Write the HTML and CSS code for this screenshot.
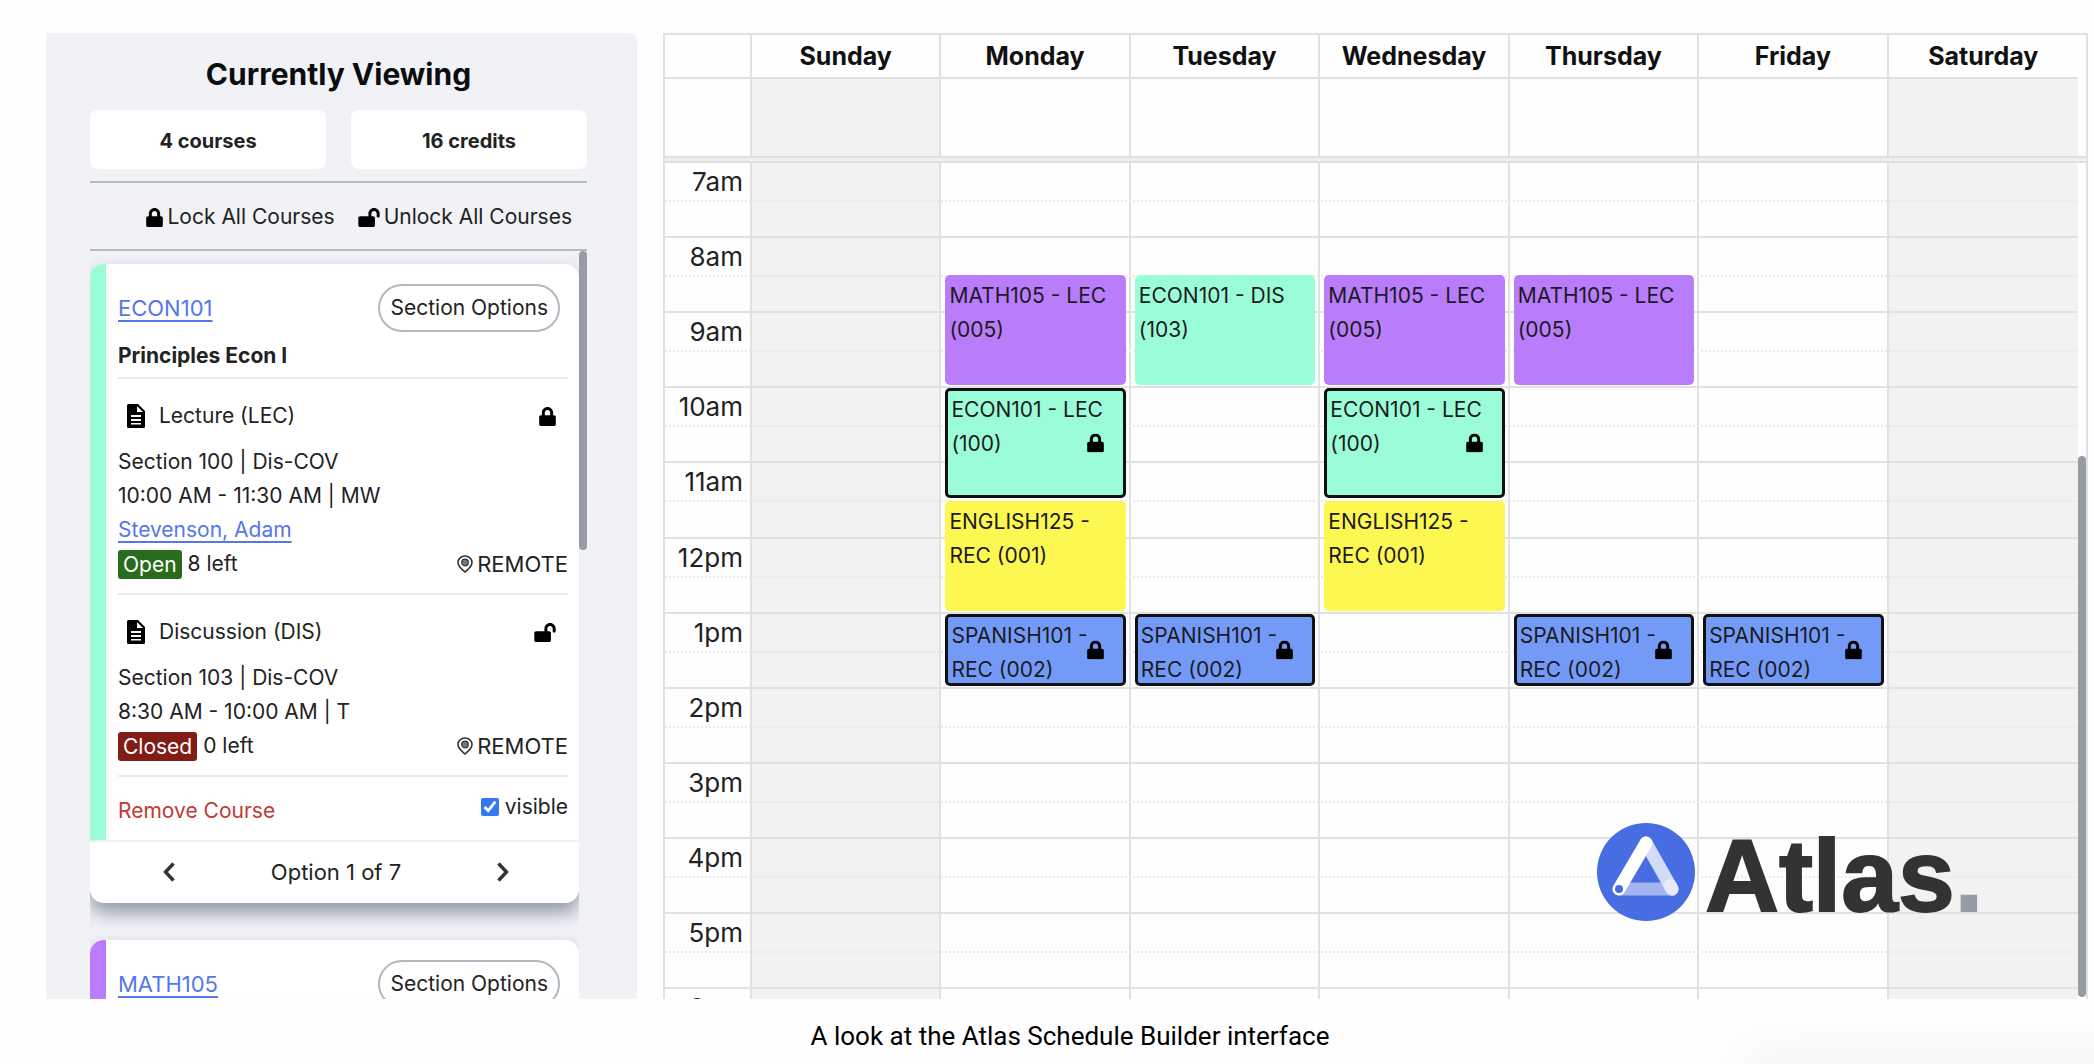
FILE: index.html
```html
<!DOCTYPE html>
<html lang="en">
<head>
<meta charset="utf-8">
<title>Atlas Schedule Builder</title>
<link rel="stylesheet" href="styles.css">
</head>
<body>
<svg class="sprite" aria-hidden="true">
  <symbol id="lock" viewBox="0 0 448 512"><path d="M400 224h-24v-72C376 68.2 307.8 0 224 0S72 68.2 72 152v72H48c-26.5 0-48 21.5-48 48v192c0 26.5 21.5 48 48 48h352c26.5 0 48-21.5 48-48V272c0-26.5-21.5-48-48-48zm-104 0H152v-72c0-39.7 32.3-72 72-72s72 32.3 72 72v72z"/></symbol>
  <symbol id="unlock" viewBox="0 0 576 512"><path d="M423.500 0C339.500.3 272 69.500 272 153.500V224H48c-26.500 0-48 21.500-48 48v192c0 26.500 21.500 48 48 48h352c26.500 0 48-21.500 48-48V272c0-26.500-21.500-48-48-48h-48v-71.100c0-39.600 31.700-72.500 71.300-72.900 40-.4 72.700 32.100 72.700 72v80c0 13.300 10.700 24 24 24h32c13.300 0 24-10.700 24-24v-80C576 68 507.500-.3 423.500 0z"/></symbol>
  <symbol id="file" viewBox="0 0 18 24"><path fill-rule="evenodd" d="M1.500 0H11l7 7v15.500A1.500 1.500 0 0 1 16.500 24h-15A1.500 1.500 0 0 1 0 22.500v-21A1.500 1.500 0 0 1 1.500 0zM10 2v6h6zM4 11v2h10v-2zM4 15v2h10v-2zM4 19v1.500h10V19z"/></symbol>
  <symbol id="pin" viewBox="0 0 16 18"><path fill="none" stroke="#333" stroke-width="1.600" d="M8 17C4.500 14 1 11.500 1 7.500a7 6.500 0 0 1 14 0C15 11.500 11.500 14 8 17z"/><circle cx="8" cy="7.500" r="3.300" fill="#777" stroke="#333" stroke-width="1.200"/></symbol>
  <symbol id="prev" viewBox="0 0 12 20"><path fill="none" stroke="#333" stroke-width="3.400" d="M10.500 1.500L2.500 10l8 8.500"/></symbol>
  <symbol id="next" viewBox="0 0 12 20"><path fill="none" stroke="#333" stroke-width="3.400" d="M1.500 1.500l8 8.500-8 8.500"/></symbol>
</svg>
<figure class="shot">
  <div class="app">
    <aside class="panel">
      <h1 class="panel-title">Currently Viewing</h1>
      <div class="stats">
        <div class="stat">4 courses</div>
        <div class="stat">16 credits</div>
      </div>
      <div class="lock-bar">
        <button class="plain" type="button"><svg class="lock"><use href="#lock"/></svg>Lock All Courses</button>
        <button class="plain" type="button"><svg class="unlock"><use href="#unlock"/></svg>Unlock All Courses</button>
      </div>
      <div class="course-list">
        <div class="cards">
          <article class="card">
            <div class="card-body mint">
              <header class="card-head"><a href="#econ101">ECON101</a><button class="pill" type="button">Section Options</button></header>
              <h2 class="card-name">Principles Econ I</h2>
              <section class="section">
                <div class="section-type"><svg class="file"><use href="#file"/></svg><span>Lecture (LEC)</span><button class="plain lock-toggle" type="button" aria-label="Unlock section"><svg class="lock"><use href="#lock"/></svg></button></div>
                <p>Section 100 | Dis-COV</p>
                <p>10:00 AM - 11:30 AM | MW</p>
                <p><a href="#stevenson">Stevenson, Adam</a></p>
                <p class="seats"><span class="badge open">Open</span>8 left<span class="place"><svg class="pin"><use href="#pin"/></svg>REMOTE</span></p>
              </section>
              <section class="section">
                <div class="section-type"><svg class="file"><use href="#file"/></svg><span>Discussion (DIS)</span><button class="plain lock-toggle" type="button" aria-label="Lock section"><svg class="unlock"><use href="#unlock"/></svg></button></div>
                <p>Section 103 | Dis-COV</p>
                <p>8:30 AM - 10:00 AM | T</p>
                <p class="seats"><span class="badge closed">Closed</span>0 left<span class="place"><svg class="pin"><use href="#pin"/></svg>REMOTE</span></p>
              </section>
              <div class="card-actions">
                <button class="plain remove" type="button">Remove Course</button>
                <label class="visible"><input type="checkbox" checked>visible</label>
              </div>
            </div>
            <footer class="pager">
              <button class="plain" type="button" aria-label="Previous option"><svg class="chevron"><use href="#prev"/></svg></button>
              <span>Option 1 of 7</span>
              <button class="plain" type="button" aria-label="Next option"><svg class="chevron"><use href="#next"/></svg></button>
            </footer>
          </article>
          <article class="card">
            <div class="card-body purple">
              <header class="card-head"><a href="#math105">MATH105</a><button class="pill" type="button">Section Options</button></header>
            </div>
          </article>
        </div>
        <div class="track"><div class="thumb"></div></div>
      </div>
    </aside>

    <main class="calendar">
      <div class="row days">
        <div></div><div>Sunday</div><div>Monday</div><div>Tuesday</div><div>Wednesday</div><div>Thursday</div><div>Friday</div><div>Saturday</div>
      </div>
      <div class="row all-day">
        <div></div><div class="weekend"></div><div></div><div></div><div></div><div></div><div></div><div class="weekend"></div>
      </div>
      <div class="divider"></div>
      <div class="row times">
        <div class="col axis"></div><div class="col sun weekend"></div><div class="col mon"></div><div class="col tue"></div><div class="col wed"></div><div class="col thu"></div><div class="col fri"></div><div class="col sat weekend"></div>
        <div class="hour">7am</div>
        <div class="hour">8am</div>
        <div class="hour">9am</div>
        <div class="hour">10am</div>
        <div class="hour">11am</div>
        <div class="hour">12pm</div>
        <div class="hour">1pm</div>
        <div class="hour">2pm</div>
        <div class="hour">3pm</div>
        <div class="hour">4pm</div>
        <div class="hour">5pm</div>
        <div class="hour">6pm</div>
        <div class="event purple mon at-830">MATH105 - LEC (005)</div>
        <div class="event mint tue at-830">ECON101 - DIS (103)</div>
        <div class="event purple wed at-830">MATH105 - LEC (005)</div>
        <div class="event purple thu at-830">MATH105 - LEC (005)</div>
        <div class="event mint locked mon at-10">ECON101 - LEC (100)<svg class="lock"><use href="#lock"/></svg></div>
        <div class="event mint locked wed at-10">ECON101 - LEC (100)<svg class="lock"><use href="#lock"/></svg></div>
        <div class="event yellow mon at-1130">ENGLISH125 - REC (001)</div>
        <div class="event yellow wed at-1130">ENGLISH125 - REC (001)</div>
        <div class="event blue locked mon at-13">SPANISH101 - REC (002)<svg class="lock"><use href="#lock"/></svg></div>
        <div class="event blue locked tue at-13">SPANISH101 - REC (002)<svg class="lock"><use href="#lock"/></svg></div>
        <div class="event blue locked thu at-13">SPANISH101 - REC (002)<svg class="lock"><use href="#lock"/></svg></div>
        <div class="event blue locked fri at-13">SPANISH101 - REC (002)<svg class="lock"><use href="#lock"/></svg></div>
        <div class="thumb"></div>
      </div>
      <div class="brand">
        <svg class="brand-mark" viewBox="0 0 98 98" aria-hidden="true">
          <circle cx="49" cy="49" r="49" fill="#486de3"/>
          <g fill="none" stroke-linecap="round">
            <path stroke="#a4b5f0" stroke-width="13" d="M22 66h53"/>
            <path stroke="#d2dbf8" stroke-width="13" d="M49 20l26 46"/>
            <path stroke="#e5eafb" stroke-width="13" d="M73 62.500L75 66"/>
            <path stroke="#fff" stroke-width="13" d="M49 20L22 66"/>
          </g>
          <circle cx="22" cy="66" r="4" fill="#486de3"/>
        </svg>
        <span class="brand-name">Atlas<span class="brand-dot">.</span></span>
      </div>
    </main>
  </div>
  <figcaption class="caption">A look at the Atlas Schedule Builder interface</figcaption>
</figure>
<div class="corner-shade"></div>
</body>
</html>
```
FILE: styles.css
```css
:root {
  --line: #e1e1e1;
  --mint: #9afdd8;
  --purple: #b97cfa;
  --yellow: #fdf751;
  --blue: #749af8;
  --thumb: #969ba6;
}

* { box-sizing: border-box; }

body {
  margin: 0;
  background: #fefefe;
  color: #222;
  font: 21px/34px Inter, "Liberation Sans", sans-serif;
  overflow: hidden;
}

h1, h2, p { margin: 0; }
a { color: #5577ea; text-underline-offset: 4px; text-decoration-thickness: 2px; }
button, input { font: inherit; color: inherit; }
.sprite { display: none; }

.shot {
  display: flex;
  flex-direction: column;
  height: 100vh;
  margin: 0;
  padding-top: 33px;
}

.app {
  flex: 1;
  min-height: 0;
  display: grid;
  grid-template-columns: minmax(0, 591fr) minmax(0, 1425fr);
  grid-template-rows: minmax(0, 1fr);
  gap: 26px;
  padding: 0 6px 0 46px;
}

.caption {
  padding: 20px 0 11px 46px;
  color: #000;
  font: 26px/34px Roboto, "Liberation Sans", sans-serif;
  text-align: center;
}

/* Side panel */
.panel {
  display: flex;
  flex-direction: column;
  min-height: 0;
  padding: 21px 50px 0 44px;
  background: #f1f2f6;
  border-top-right-radius: 8px;
}

.panel-title {
  margin-bottom: 16px;
  color: #0c0d10;
  font-size: 30px;
  line-height: 40px;
  text-align: center;
}

.stats {
  display: grid;
  grid-template-columns: 1fr 1fr;
  gap: 25px;
  margin-bottom: 12px;
}

.stat {
  padding: 14px 0 11px;
  background: #fff;
  border-radius: 8px;
  font-size: 20px;
  font-weight: 700;
  text-align: center;
}

.lock-bar {
  display: flex;
  justify-content: flex-end;
  gap: 23px;
  padding: 17px 15px 15px;
  border: solid #b6b9c4;
  border-width: 2px 0;
}

.plain {
  display: flex;
  align-items: center;
  gap: 4px;
  padding: 0;
  border: 0;
  background: none;
  line-height: 34px;
  white-space: nowrap;
}

svg.lock { width: 17px; height: 19px; fill: #000; }
svg.unlock { width: 22px; height: 19px; fill: #000; }
svg.file { width: 18px; height: 24px; fill: #000; }
svg.pin { width: 16px; height: 18px; }
svg.chevron { width: 12px; height: 20px; }

.course-list {
  flex: 1;
  display: flex;
  min-height: 0;
}

.cards {
  flex: 1;
  min-height: 0;
  padding-top: 13px;
  overflow: hidden;
}

.track { width: 8px; }
.thumb { background: var(--thumb); border-radius: 4px; }
.track .thumb { height: 40%; }

.card {
  margin-bottom: 37px;
  background: #fff;
  border-radius: 14px;
  box-shadow: 0 10px 18px #9399a6;
}

.card-body {
  padding: 20px 11px 12px 12px;
  border-left: 16px solid;
  border-top-left-radius: 14px;
}
.card-body.mint { border-left-color: var(--mint); }
.card-body.purple { border-left-color: var(--purple); }

.card-head {
  display: flex;
  align-items: center;
  justify-content: space-between;
  padding-right: 8px;
}
.card-head a, .place, .pager { font-size: 22px; }

.pill {
  height: 48px;
  padding: 0 10px;
  background: #fff;
  border: 2px solid #b4b7c1;
  border-radius: 24px;
}

.card-name {
  padding: 7px 0 4px;
  font-size: 21px;
  line-height: 34px;
}

.section {
  padding: 20px 0 12px;
  border: solid #ececee;
  border-width: 2px 0;
}
.section + .section { border-top: 0; }

.section-type {
  display: flex;
  align-items: center;
  gap: 14px;
  margin-bottom: 12px;
  padding: 0 12px 0 9px;
}
.lock-toggle { margin-left: auto; }

.seats { display: flex; align-items: center; gap: 6px; }
.badge {
  padding: 0 5px;
  border-radius: 3px;
  color: #fff;
  line-height: 29px;
}
.open { background: #2a6b1d; }
.closed { background: #841c16; }
.place { display: flex; align-items: center; gap: 4px; margin-left: auto; }

.card-actions {
  display: flex;
  align-items: flex-start;
  justify-content: space-between;
  padding-top: 13px;
}
.remove { padding-top: 4px; color: #c13a35; }
.visible { display: flex; align-items: center; gap: 6px; }
.visible input { width: 18px; height: 18px; margin: 0; accent-color: #3478f6; }

.pager {
  display: flex;
  align-items: center;
  justify-content: space-between;
  padding: 13px 70px 14px 73px;
  border-top: 2px solid #efeff0;
}

/* Calendar */
.calendar {
  position: relative;
  display: flex;
  flex-direction: column;
  min-height: 0;
  border: 2px solid var(--line);
  border-bottom: 0;
  overflow: hidden;
}

.row {
  display: grid;
  grid-template-columns: 87px repeat(7, minmax(0, 1fr));
  padding-right: 8px;
}

.days > div, .all-day > div, .col { border-right: 2px solid var(--line); }
.days > :last-child, .all-day > :last-child, .sat { border-right: 0; }

.days > div {
  height: 44px;
  border-bottom: 2px solid var(--line);
  color: #111;
  font-size: 25px;
  font-weight: 700;
  line-height: 42px;
  text-align: center;
}

.all-day > div { height: 77px; }
.weekend { background: #f2f2f2; }

.divider {
  height: 7px;
  flex: none;
  background: #eee;
  border: solid var(--line);
  border-width: 2px 0;
}

.times {
  position: relative;
  flex: 1;
  min-height: 0;
  grid-template-rows: repeat(4, 37px 38px) 38px 38px repeat(7, 37px 38px);
  overflow: hidden;
}

.col { grid-row: 1 / -1; }
.axis { grid-column: 1; }
.sun { grid-column: 2; }
.mon { grid-column: 3; }
.tue { grid-column: 4; }
.wed { grid-column: 5; }
.thu { grid-column: 6; }
.fri { grid-column: 7; }
.sat { grid-column: 8; }

.hour {
  grid-column: 1 / -1;
  display: grid;
  grid-template-columns: 78px;
  grid-template-rows: 37px 2px;
  border-bottom: 2px solid var(--line);
  font-size: 26px;
  line-height: 37px;
  text-align: right;
  overflow: hidden;
}
.hour::after {
  content: "";
  width: 100vw;
  border-top: 2px dotted #e9e9e9;
}
.hour:nth-of-type(9) { grid-row: 1 / 3; }
.hour:nth-of-type(10) { grid-row: 3 / 5; }
.hour:nth-of-type(11) { grid-row: 5 / 7; }
.hour:nth-of-type(12) { grid-row: 7 / 9; }
.hour:nth-of-type(13) { grid-row: 9 / 11; }
.hour:nth-of-type(14) { grid-row: 11 / 13; }
.hour:nth-of-type(15) { grid-row: 13 / 15; }
.hour:nth-of-type(16) { grid-row: 15 / 17; }
.hour:nth-of-type(17) { grid-row: 17 / 19; }
.hour:nth-of-type(18) { grid-row: 19 / 21; }
.hour:nth-of-type(19) { grid-row: 21 / 23; }
.hour:nth-of-type(20) { grid-row: 23 / 25; }

.event {
  position: relative;
  margin: 0 5px 3px 4px;
  padding: 4px 12px 0 4px;
  border-radius: 5px;
  color: #1b1b1f;
}
.event.mint { background: var(--mint); }
.event.purple { background: var(--purple); }
.event.yellow { background: var(--yellow); }
.event.blue { background: var(--blue); }
.event.locked { padding: 2px 12px 0 3px; border: 3px solid #111; }
.event .lock {
  position: absolute;
  top: 50%;
  right: 19px;
  transform: translateY(-50%);
}
.at-830 { grid-row: 4 / 7; }
.at-10 { grid-row: 7 / 10; }
.at-1130 { grid-row: 10 / 13; }
.at-13 { grid-row: 13 / 15; }

.times .thumb {
  position: absolute;
  top: 35%;
  right: 0;
  bottom: 2px;
  width: 8px;
}

.brand {
  position: absolute;
  right: 103px;
  bottom: 78px;
  display: flex;
  align-items: center;
  gap: 10px;
}
.brand-mark { width: 98px; height: 98px; }
.brand-name {
  padding-top: 8px;
  color: #333;
  font: 700 102px/86px "Liberation Sans", sans-serif;
  -webkit-text-stroke: 2px currentColor;
}
.brand-dot { color: var(--thumb); }

.corner-shade {
  position: fixed;
  top: 100%;
  right: -60px;
  width: 400px;
  height: 100px;
  box-shadow: 0 0 60px 10px rgba(0, 0, 0, 0.05);
}
```
